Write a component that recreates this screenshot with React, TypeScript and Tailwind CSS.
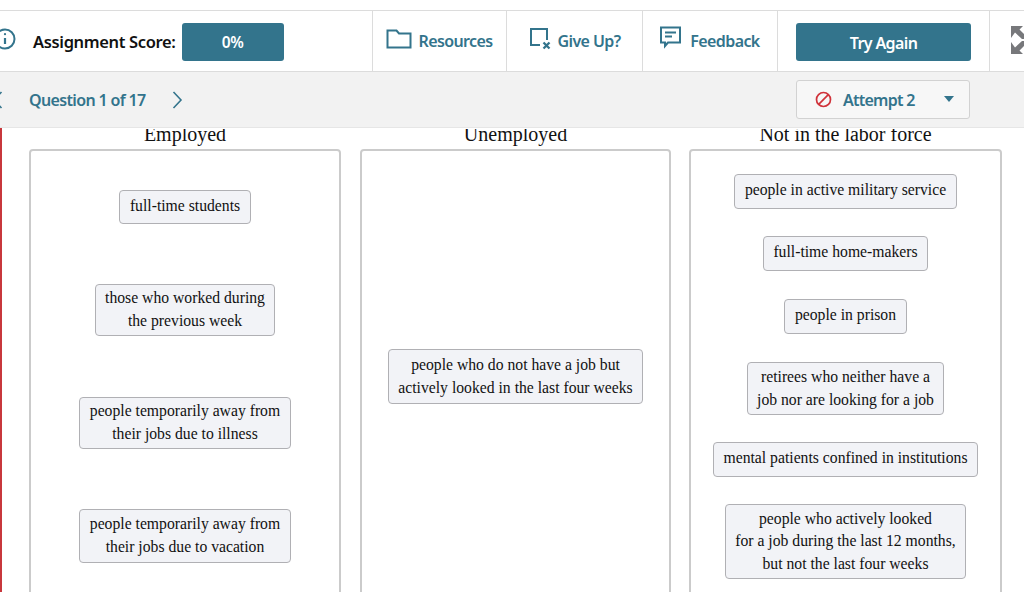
import React from "react";

const sans = "font-['Noto_Sans',sans-serif]";

function Chip({ lines, h, mt }: { lines: string[]; h: string; mt: string }) {
  return (
    <div className={`${h} ${mt} flex flex-col justify-center rounded-[4px] border border-[#b0b0b4] bg-[#f2f3f7] px-[9.5px] ${lines.length > 1 ? "pb-0" : "pb-[2px]"} text-center text-[15.7px] leading-[22.6px] text-[#111] whitespace-nowrap`}>
      {lines.map((l) => (
        <div key={l}>{l}</div>
      ))}
    </div>
  );
}

function Column({ title, width, children }: { title: string; width: string; children: React.ReactNode }) {
  return (
    <div className={`${width} flex flex-col`}>
      <div className="h-[20px] shrink-0 overflow-hidden text-center text-[20px] leading-[10px] text-[#111]">{title}</div>
      <div className="flex h-[500px] shrink-0 flex-col items-center rounded-[4px] border-2 border-[#cbcbcb] bg-white">{children}</div>
    </div>
  );
}

function ToolButton({ width, label, icon }: { width: string; label: string; icon: React.ReactNode }) {
  return (
    <div className={`${width} flex items-center justify-center gap-[6px] border-r border-[#dcdcdc] text-[16px] font-semibold text-[#33748c]`}>
      {icon}
      <span className="tracking-[-0.6px]">{label}</span>
    </div>
  );
}

export default function App() {
  return (
    <div className={`h-[592px] w-[1024px] overflow-hidden bg-white ${sans}`}>
      <div className="h-[10px] bg-white" />
      <header className="flex h-[62px] border-y border-[#dcdcdc] bg-white">
        <div className="flex w-[373px] items-center border-r border-[#dcdcdc]">
          <svg className="-ml-[8px] shrink-0 -mt-[4px]" width="27" height="27" viewBox="0 0 27 27" fill="none" stroke="#33748c" strokeWidth="2">
            <circle cx="13" cy="13" r="9.5" />
            <path d="M13 12v6" strokeWidth="2.2" />
            <circle cx="13" cy="8.2" r="1.1" fill="#33748c" stroke="none" />
          </svg>
          <span className="ml-[14px] mt-[2px] text-[16.5px] font-semibold tracking-[-0.35px] text-[#111]">Assignment Score:</span>
          <div className="ml-[6px] mt-[1px] flex h-[38px] w-[102px] items-center justify-center rounded-[3px] bg-[#33748c] pt-[2px] text-[15.5px] font-semibold tracking-[-0.5px] text-white">0%</div>
        </div>
        <ToolButton
          width="w-[134px]"
          label="Resources"
          icon={
            <svg className="-mt-[5px]" width="26" height="22" viewBox="0 0 26 22" fill="none" stroke="#33748c" strokeWidth="2">
              <path d="M1.5 19.5V2.5h9l2.5 3h11.5v14z" />
            </svg>
          }
        />
        <ToolButton
          width="w-[136px]"
          label="Give Up?"
          icon={
            <svg className="-mt-[5px]" width="23" height="23" viewBox="0 0 23 23" fill="none" stroke="#33748c" strokeWidth="2">
              <path d="M11 18H2V2h16v11" />
              <path d="M14.5 15.5l6 6m0-6l-6 6" strokeWidth="2.3" />
            </svg>
          }
        />
        <ToolButton
          width="w-[135px]"
          label="Feedback"
          icon={
            <svg className="-mt-[7px] mr-[3px]" width="21" height="23" viewBox="0 0 21 23" fill="none" stroke="#33748c" strokeWidth="2">
              <path d="M1 1.5h19v15H8l-3 3.5v-3.5H1z" />
              <path d="M5 6.5h11M5 10.5h7" />
            </svg>
          }
        />
        <div className="flex w-[212px] items-center justify-center border-r border-[#dcdcdc]">
          <button className="mt-[2px] h-[38px] w-[175px] rounded-[3px] bg-[#33748c] pt-[2px] text-[16px] font-semibold tracking-[-0.6px] text-white">Try Again</button>
        </div>
        <div className="flex flex-1 items-center pl-[21px]">
          <svg className="-mt-[2px] shrink-0" width="13" height="28" viewBox="0 0 13 28" fill="#77787b">
            <path d="M0 0h12L8.5 3.5 13 8v5h-2L4 6.5 0 12z" />
            <path d="M0 28h12L8.5 24.5 13 20v-5h-2L4 21.5 0 16z" />
          </svg>
        </div>
      </header>
      <div className="flex h-[56px] items-center justify-between border-b border-[#e6e6e6] bg-[#f2f2f2]">
        <div className="flex items-center">
          <svg className="-ml-[8px]" width="11" height="18" viewBox="0 0 11 18" fill="none" stroke="#33748c" strokeWidth="1.6">
            <path d="M9.5 1L2 9l7.5 8" />
          </svg>
          <span className="ml-[26px] text-[16px] font-semibold tracking-[-0.65px] text-[#33748c]">Question 1 of 17</span>
          <svg className="ml-[26px]" width="11" height="18" viewBox="0 0 11 18" fill="none" stroke="#33748c" strokeWidth="1.6">
            <path d="M1.5 1L9 9l-7.5 8" />
          </svg>
        </div>
        <div className="mr-[54px] flex h-[39px] w-[174px] items-center rounded-[3px] border border-[#d2d2d2] bg-[#f7f7f7] pl-[18px] pr-[15px]">
          <svg width="17" height="17" viewBox="0 0 17 17" fill="none" stroke="#d0323a" strokeWidth="1.7">
            <circle cx="8.5" cy="8.5" r="7" />
            <path d="M3.7 13.3l9.6-9.6" />
          </svg>
          <span className="ml-[11px] text-[16px] font-semibold tracking-[-0.75px] text-[#33748c]">Attempt 2</span>
          <svg className="ml-auto -mt-[2px]" width="10" height="6" viewBox="0 0 10 6" fill="#33748c">
            <path d="M0 0h10L5 6z" />
          </svg>
        </div>
      </div>
      <main className="flex h-[464px] overflow-hidden border-l-2 border-[#c8373c] pl-[27px] pt-[1px] font-['Liberation_Serif',serif]">
        <Column title="Employed" width="w-[312px]">
          <Chip lines={["full-time students"]} h="h-[34px]" mt="mt-[39px]" />
          <Chip lines={["those who worked during", "the previous week"]} h="h-[52px]" mt="mt-[60px]" />
          <Chip lines={["people temporarily away from", "their jobs due to illness"]} h="h-[52px]" mt="mt-[61px]" />
          <Chip lines={["people temporarily away from", "their jobs due to vacation"]} h="h-[54px]" mt="mt-[60px]" />
        </Column>
        <div className="w-[19px]" />
        <Column title="Unemployed" width="w-[311px]">
          <Chip lines={["people who do not have a job but", "actively looked in the last four weeks"]} h="h-[55px]" mt="mt-[198px]" />
        </Column>
        <div className="w-[18px]" />
        <Column title="Not in the labor force" width="w-[313px]">
          <Chip lines={["people in active military service"]} h="h-[35px]" mt="mt-[23px]" />
          <Chip lines={["full-time home-makers"]} h="h-[35px]" mt="mt-[27px]" />
          <Chip lines={["people in prison"]} h="h-[35px]" mt="mt-[28px]" />
          <Chip lines={["retirees who neither have a", "job nor are looking for a job"]} h="h-[53px]" mt="mt-[28px]" />
          <Chip lines={["mental patients confined in institutions"]} h="h-[35px]" mt="mt-[27px]" />
          <Chip lines={["people who actively looked", "for a job during the last 12 months,", "but not the last four weeks"]} h="h-[75px]" mt="mt-[27px]" />
        </Column>
      </main>
    </div>
  );
}
